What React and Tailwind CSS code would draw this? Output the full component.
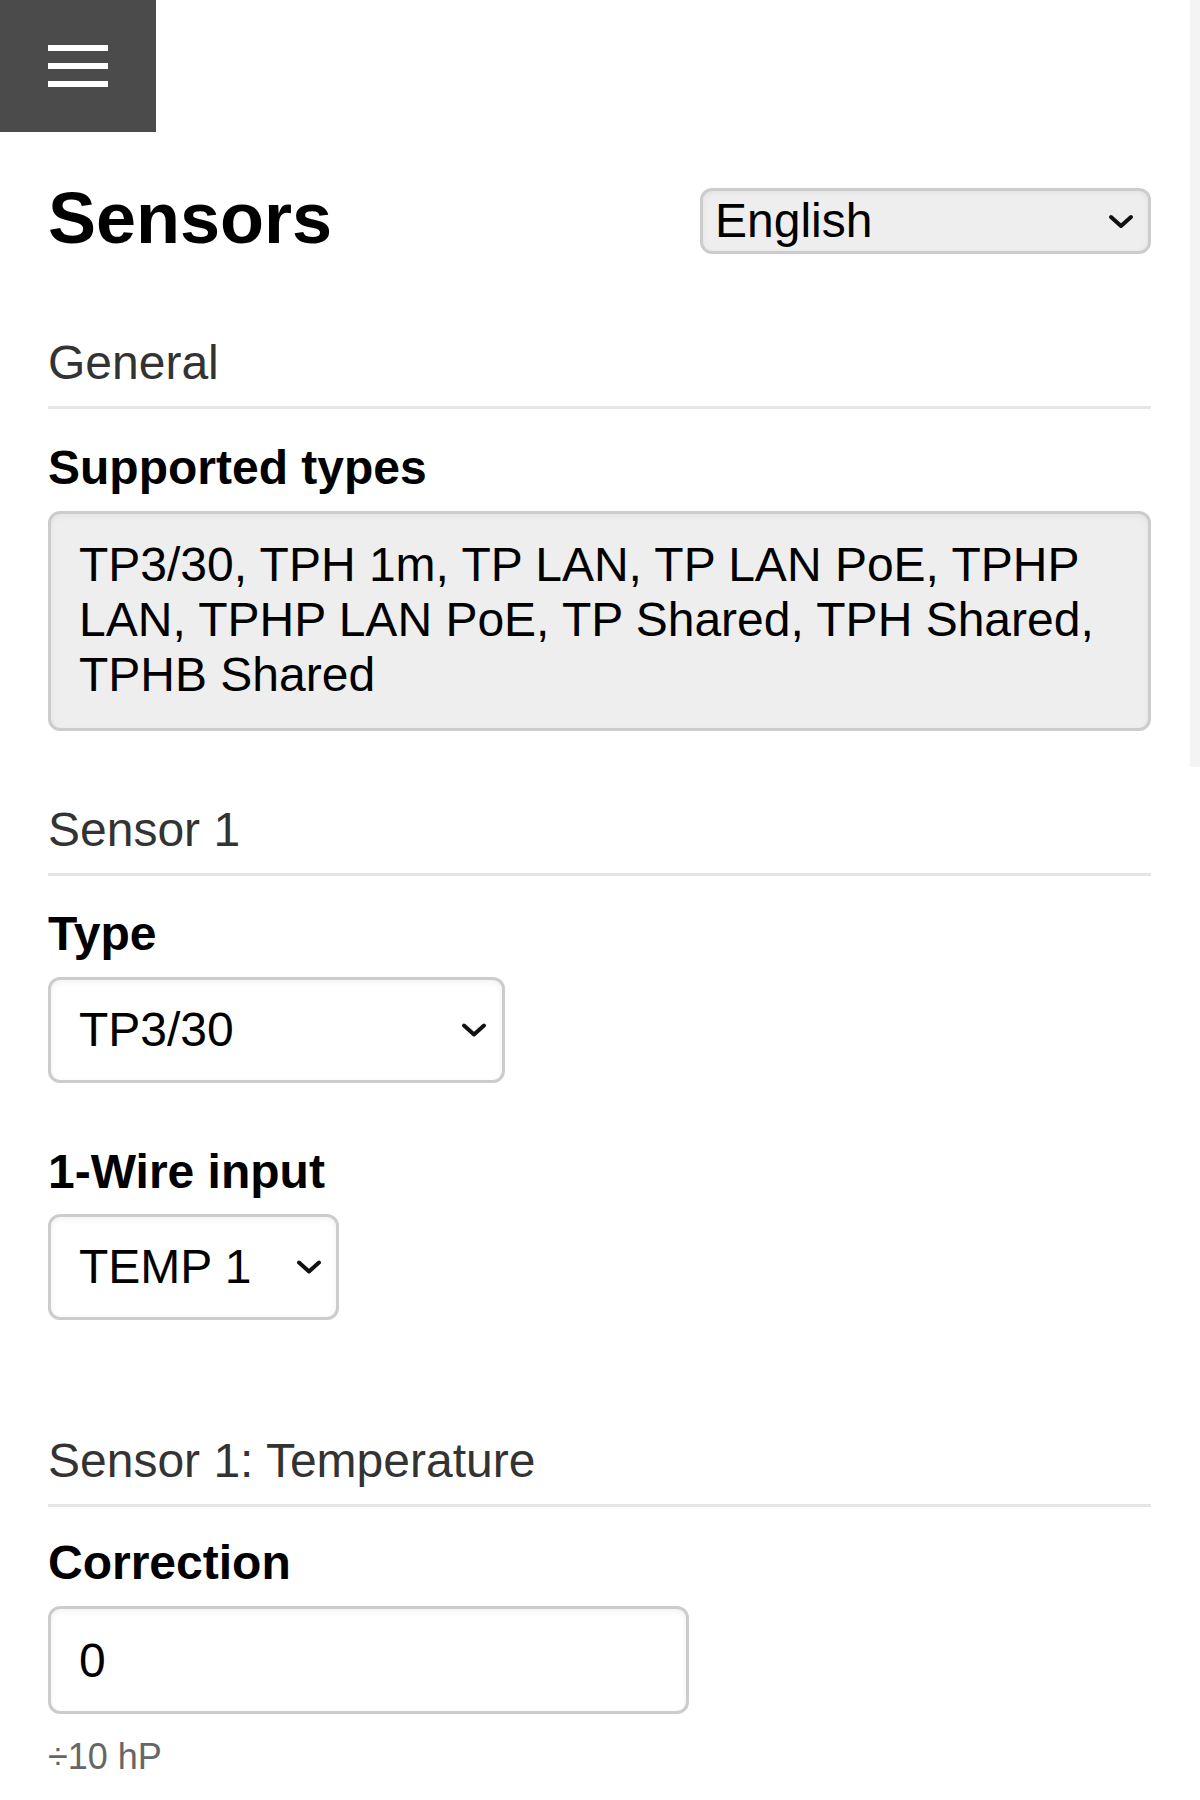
import { useState } from 'react';

function Chevron({ className = '' }) {
  return (
    <svg viewBox="0 0 26 15" className={className} fill="none" stroke="#111" strokeWidth="4" strokeLinecap="round" strokeLinejoin="round">
      <polyline points="3,3 13,12 23,3" />
    </svg>
  );
}

function Select({ value, options, onChange, width, chevronRight = 'right-[18px]' }) {
  return (
    <div className={`relative ${width}`}>
      <select
        value={value}
        onChange={(e) => onChange(e.target.value)}
        className="w-full h-[106px] bg-white pl-[28px] appearance-none border-[3px] border-[#cccccc] rounded-[12px] pr-[60px] text-[48px] text-black outline-none shadow-[inset_0_2px_6px_rgba(0,0,0,0.06)]"
      >
        {options.map((o) => <option key={o} value={o}>{o}</option>)}
      </select>
      <Chevron className={`pointer-events-none absolute top-1/2 -translate-y-1/2 w-[26px] h-[15px] ${chevronRight}`} />
    </div>
  );
}

// language picker drawn as a plain button so the label sits where the original does
function LangPicker({ value }) {
  return (
    <button
      type="button"
      className="w-[451px] h-[66px] flex items-center justify-between bg-[#eeeeee] border-[3px] border-[#cccccc] rounded-[12px] pl-[12px] pr-[14px] pb-[1px] shadow-[inset_0_2px_6px_rgba(0,0,0,0.05)]"
    >
      <span className="text-[48px] leading-[55px] text-black">{value}</span>
      <Chevron className="w-[26px] h-[15px] mt-[2px]" />
    </button>
  );
}

function SectionTitle({ children }) {
  return (
    <h2 className="text-[48px] leading-[55px] text-[#333333] pb-[16px] border-b-[3px] border-[#e5e5e5]">{children}</h2>
  );
}

function Label({ children }) {
  return <div className="text-[48px] leading-[55px] font-bold text-black">{children}</div>;
}

const TYPES = ['TP3/30', 'TPH 1m', 'TP LAN', 'TP LAN PoE', 'TPHP LAN', 'TPHP LAN PoE', 'TP Shared', 'TPH Shared', 'TPHB Shared'];

export default function App() {
  const [type, setType] = useState('TP3/30');
  const [wire, setWire] = useState('TEMP 1');
  const [corr, setCorr] = useState('0');

  return (
    <div className="relative min-h-[1800px] bg-white font-['Liberation_Sans',Arial,sans-serif] text-black">
      <div className="absolute right-0 top-0 w-[10px] h-[767px] bg-[#f4f4f4]" />

      <button type="button" className="w-[156px] h-[132px] bg-[#4b4b4b] flex flex-col items-center justify-center gap-[12px]">
        <span className="block w-[60px] h-[6px] bg-white" />
        <span className="block w-[60px] h-[6px] bg-white" />
        <span className="block w-[60px] h-[6px] bg-white" />
      </button>

      <div className="pl-[48px] pr-[49px]">
        <div className="mt-[45px] flex items-center justify-between h-[83px]">
          <h1 className="text-[72px] leading-[83px] font-bold">Sensors</h1>
          <div className="mt-[5px]">
            <LangPicker value="English" />
          </div>
        </div>

        <div className="mt-[75px]">
          <SectionTitle>General</SectionTitle>
        </div>
        <div className="mt-[31px]">
          <Label>Supported types</Label>
          <div className="mt-[16px] bg-[#eeeeee] border-[3px] border-[#cccccc] rounded-[12px] pl-[28px] pr-[30px] pt-[23px] pb-[26px] text-[48px] leading-[55px] shadow-[inset_0_2px_6px_rgba(0,0,0,0.05)]">
            {TYPES.join(', ')}
          </div>
        </div>

        <div className="mt-[71px]">
          <SectionTitle>Sensor 1</SectionTitle>
        </div>
        <div className="mt-[30px]">
          <Label>Type</Label>
          <div className="mt-[16px]">
            <Select value={type} options={TYPES} onChange={setType} width="w-[457px]" />
          </div>
        </div>
        <div className="mt-[61px]">
          <Label>1-Wire input</Label>
          <div className="mt-[15px]">
            <Select value={wire} options={['TEMP 1', 'TEMP 2']} onChange={setWire} width="w-[291px]" chevronRight="right-[17px]" />
          </div>
        </div>

        <div className="mt-[113px]">
          <SectionTitle>Sensor 1: Temperature</SectionTitle>
        </div>
        <div className="mt-[28px]">
          <Label>Correction</Label>
          <input
            value={corr}
            onChange={(e) => setCorr(e.target.value)}
            className="mt-[16px] block w-[641px] h-[108px] border-[3px] border-[#cccccc] rounded-[12px] pl-[28px] text-[48px] outline-none shadow-[inset_0_2px_6px_rgba(0,0,0,0.06)]"
          />
          <div className="mt-[22px] text-[36px] leading-[41px] text-[#666666]">÷10 hP</div>
        </div>
      </div>
    </div>
  );
}
